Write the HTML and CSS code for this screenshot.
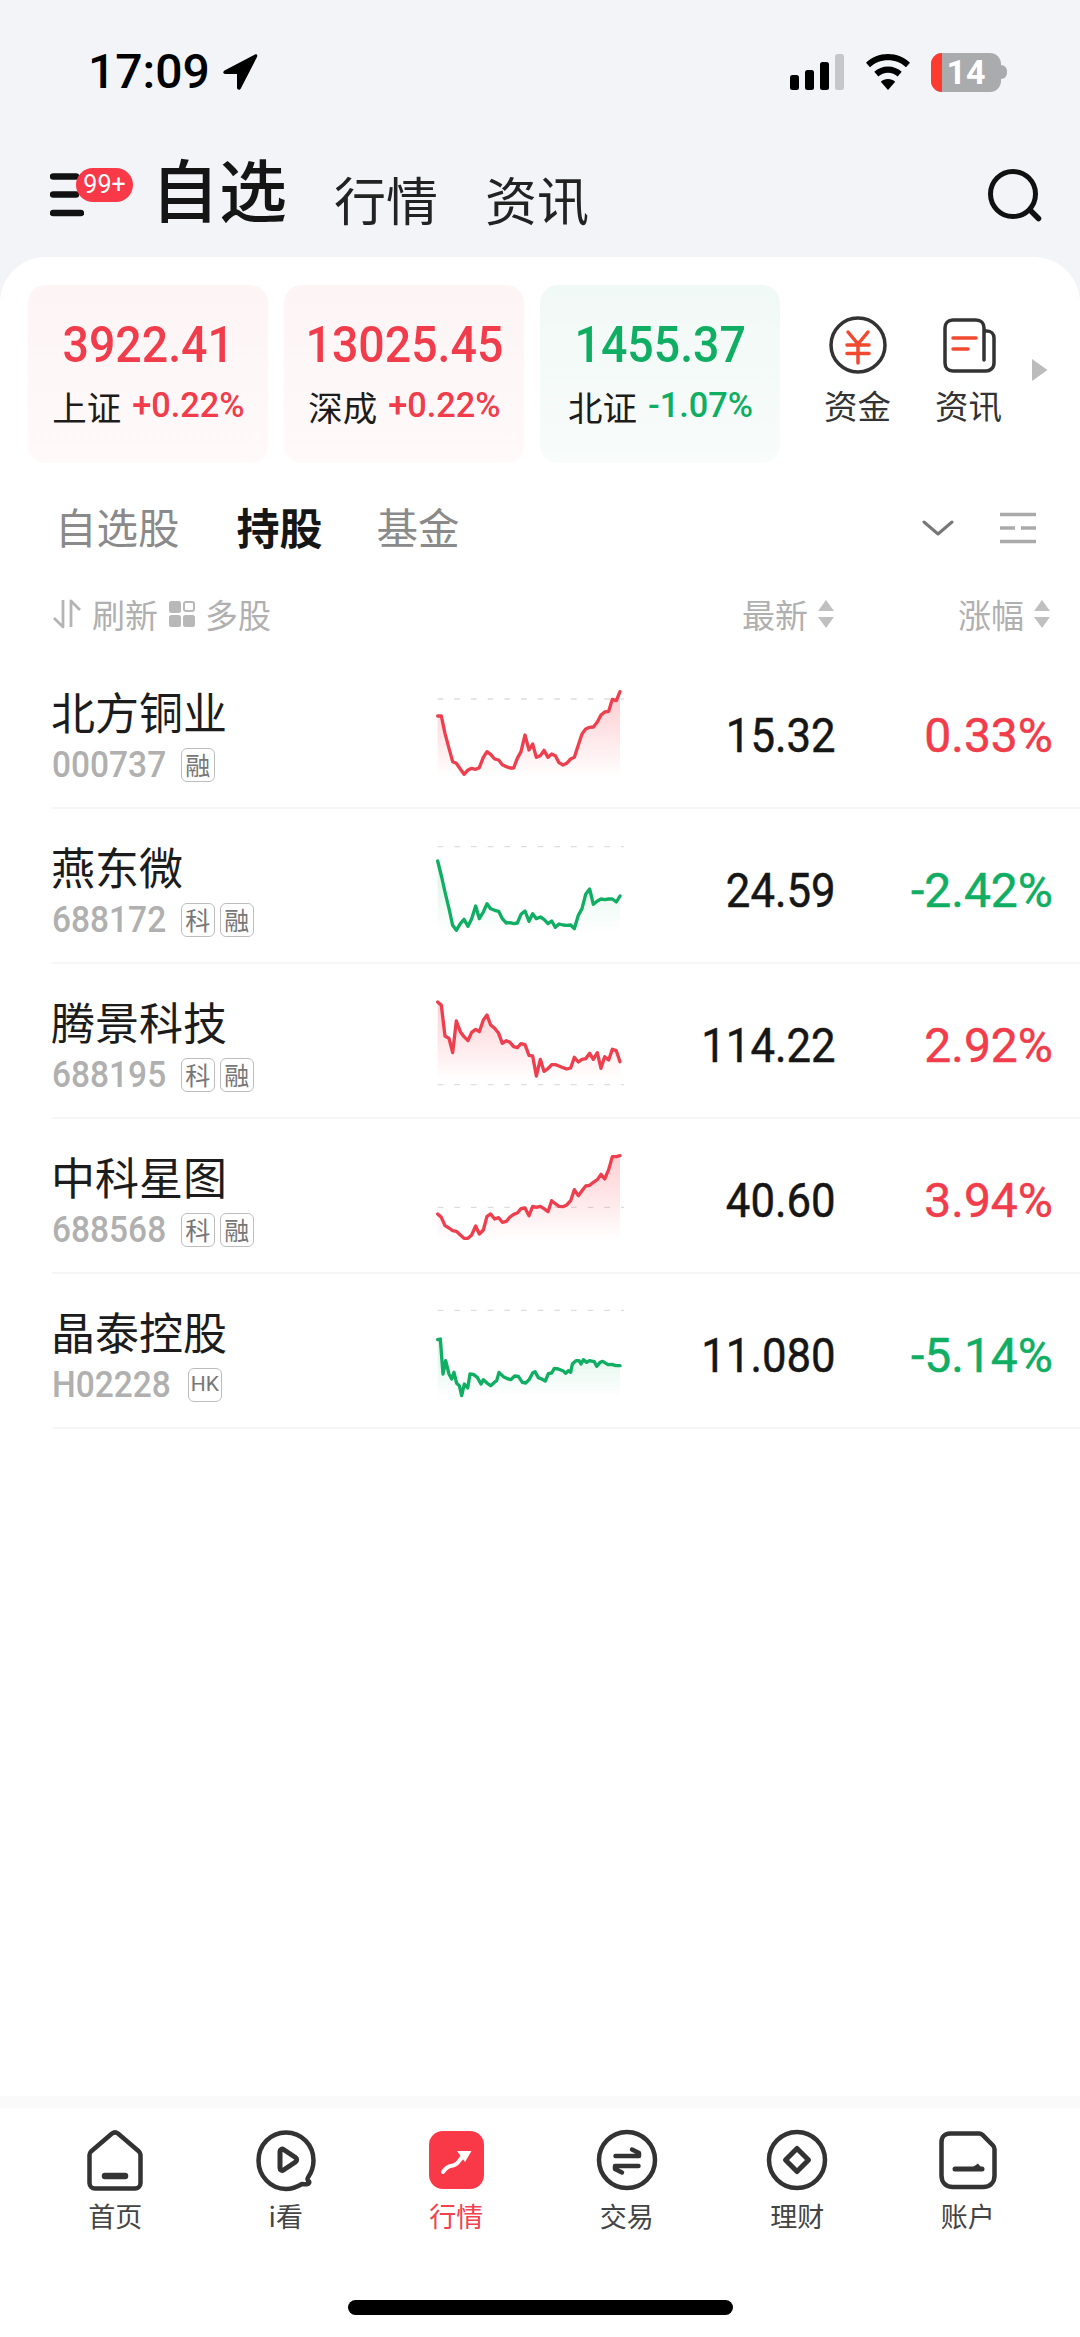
FILE: index.html
```html
<!DOCTYPE html>
<html lang="zh">
<head>
<meta charset="utf-8">
<title>自选</title>
<link rel="stylesheet" href="styles.css">
</head>
<body>
<div class="page">
  <div class="status">
    <span class="time">17:09</span>
    <svg class="loc" width="36" height="38" viewBox="0 0 36 38"><path d="M33 1.5 2.5 17.5c-2 1.200-1.500 3.500.8 3.500H15v13.500c0 2.500 2.800 3 3.800 1L35 4c.9-2-.3-3.400-2-2.500Z" fill="#000"/></svg>
    <span class="status-gap"></span>
    <svg width="54" height="36" viewBox="0 0 54 36"><rect x="0" y="21" width="9" height="15" rx="2.500"/><rect x="15" y="16" width="9" height="20" rx="2.500"/><rect x="30" y="8" width="9" height="28" rx="2.500"/><rect x="45" y="0" width="9" height="36" rx="2.500" fill="#c6c7cb"/></svg>
    <svg class="wifi" width="46" height="36" viewBox="0 0 46 36"><path d="M23 0C14.500 0 6.800 3.300 1 8.700l4 4.600C9.700 8.900 16 6.300 23 6.300s13.300 2.600 18 7l4-4.600C39.200 3.300 31.500 0 23 0Z"/><path d="M23 12.500c-5.300 0-10.100 2-13.700 5.300l4 4.600c2.600-2.300 6-3.700 9.700-3.700s7.100 1.400 9.700 3.700l4-4.600C33.100 14.500 28.300 12.500 23 12.500Z"/><path d="M23 25c-2.800 0-5.300 1-7.200 2.700L23 36l7.200-8.300C28.300 26 25.800 25 23 25Z"/></svg>
    <div class="battery"><span class="battery-red"></span><span class="battery-num">14</span></div>
    <span class="battery-nub"></span>
  </div>

  <header class="top">
    <div class="burger">
      <svg width="34" height="44" viewBox="0 0 34 44"><path d="M3 3.500H26M3 21.500H26" stroke="#111" stroke-width="6.500" stroke-linecap="round"/><path d="M3 40H31" stroke="#111" stroke-width="6.500" stroke-linecap="round"/></svg>
      <span class="badge">99+</span>
    </div>
    <span class="title">自选</span>
    <span class="nav">行情</span>
    <span class="nav">资讯</span>
    <span class="grow"></span>
    <svg class="search" width="56" height="56" viewBox="0 0 56 56"><circle cx="26" cy="26" r="22.500" fill="none" stroke="#111" stroke-width="5"/><path d="M43 42l8.500 8.500" stroke="#111" stroke-width="5.500" stroke-linecap="round"/></svg>
  </header>

  <main class="card">
    <section class="indices">
      <div class="idx up">
        <div class="idx-val"><span class="din center">3922.41</span></div>
        <div class="idx-sub"><span class="idx-name">上证</span><span class="din idx-pct">+0.22%</span></div>
      </div>
      <div class="idx up">
        <div class="idx-val"><span class="din center">13025.45</span></div>
        <div class="idx-sub"><span class="idx-name">深成</span><span class="din idx-pct">+0.22%</span></div>
      </div>
      <div class="idx down">
        <div class="idx-val"><span class="din center">1455.37</span></div>
        <div class="idx-sub"><span class="idx-name">北证</span><span class="din idx-pct">-1.07%</span></div>
      </div>
      <div class="shortcut">
        <svg width="60" height="60" viewBox="0 0 60 60"><circle cx="30" cy="30" r="27" fill="none" stroke="#333" stroke-width="3.500"/><path d="M20 17l10 12 10-12M19 30H41M19 38.500H41M30 29V48" fill="none" stroke="#f0492f" stroke-width="3.500" stroke-linecap="round" stroke-linejoin="round"/></svg>
        <span>资金</span>
      </div>
      <div class="shortcut">
        <svg width="60" height="60" viewBox="0 0 60 60"><path d="M45 16h3c4 0 7 3 7 7V48c0 5-4 8-8 8H14c-5 0-8-3-8-8V13c0-5 3-8 8-8H37c5 0 8 3 8 8V45" fill="none" stroke="#333" stroke-width="3.500" stroke-linecap="round"/><path d="M14 23H37M14 34H29" stroke="#f0492f" stroke-width="3.500" stroke-linecap="round"/></svg>
        <span>资讯</span>
      </div>
      <svg class="more" width="16" height="22" viewBox="0 0 16 22"><path d="M0 0 15.500 11 0 22Z" fill="#bcbcbc"/></svg>
    </section>

    <section class="subtabs">
      <span class="subtab">自选股</span>
      <span class="subtab on">持股</span>
      <span class="subtab">基金</span>
      <span class="grow"></span>
      <svg class="chev" width="32" height="16" viewBox="0 0 32 16"><path d="M2 2 16 14 30 2" fill="none" stroke="#777" stroke-width="3" stroke-linecap="round" stroke-linejoin="round"/></svg>
      <svg class="lines" width="36" height="32" viewBox="0 0 36 32"><path d="M0 2.500H36M0 16H15M21 16H36M0 29.500H36" stroke="#aaa" stroke-width="3.500"/></svg>
    </section>

    <section class="listhead">
      <svg width="30" height="30" viewBox="0 0 30 30"><path d="M11 1V28L2 19M19 28V2L28 11" fill="none" stroke="#b4b4b4" stroke-width="2.800" stroke-linejoin="round"/></svg>
      <span class="lh-text">刷新</span>
      <svg class="lh-grid" width="26" height="26" viewBox="0 0 26 26"><rect width="12" height="12" rx="2.500" fill="#b8b8b8"/><rect x="15" y="1" width="10" height="9" rx="2" fill="none" stroke="#b8b8b8" stroke-width="2"/><rect y="14" width="12" height="12" rx="2.500" fill="#b8b8b8"/><rect x="14" y="14" width="12" height="12" rx="2.500" fill="#b8b8b8"/></svg>
      <span class="lh-text">多股</span>
      <span class="grow"></span>
      <span class="lh-text">最新</span>
      <svg class="sort" width="16" height="28" viewBox="0 0 16 28"><path d="M8 0 16 11H0ZM8 28 0 17H16Z" fill="#c0c0c0"/></svg>
      <span class="lh-text lh-pct">涨幅</span>
      <svg class="sort" width="16" height="28" viewBox="0 0 16 28"><path d="M8 0 16 11H0ZM8 28 0 17H16Z" fill="#c0c0c0"/></svg>
    </section>

    <section class="list">
      <article class="row">
        <div class="stock">
          <div class="name">北方铜业</div>
          <div class="meta"><span class="din code">000737</span><span class="tag">融</span></div>
        </div>
        <svg class="spark" viewBox="105 12 570 390" width="190" height="130">
          <defs><linearGradient id="g1" x1="0" y1="0" x2="0" y2="1"><stop offset="0" stop-color="#f93848" stop-opacity=".26"/><stop offset="1" stop-color="#f93848" stop-opacity="0"/></linearGradient></defs>
          <line class="dash" x1="113" y1="87" x2="672" y2="87"/>
          <polygon fill="url(#g1)" points="113,320 113,138 124,138 135,190 147,235 158,275 169,280 181,297 192,313 204,300 215,295 227,298 238,293 250,262 261,245 272,253 284,267 296,270 307,284 319,290 330,294 341,294 352,265 363,245 375,195 387,240 398,222 409,262 421,257 432,241 444,262 455,252 466,257 477,278 489,285 500,280 512,267 523,262 535,225 546,192 557,177 569,172 580,171 592,156 603,135 614,126 626,124 637,88 649,92 660,65 660,320"/>
          <polyline class="ln-red" points="113,138 124,138 135,190 147,235 158,275 169,280 181,297 192,313 204,300 215,295 227,298 238,293 250,262 261,245 272,253 284,267 296,270 307,284 319,290 330,294 341,294 352,265 363,245 375,195 387,240 398,222 409,262 421,257 432,241 444,262 455,252 466,257 477,278 489,285 500,280 512,267 523,262 535,225 546,192 557,177 569,172 580,171 592,156 603,135 614,126 626,124 637,88 649,92 660,65"/>
        </svg>
        <div class="price"><span class="din right">15.32</span></div>
        <div class="pct red"><span class="din right">0.33%</span></div>
      </article>

      <article class="row">
        <div class="stock">
          <div class="name">燕东微</div>
          <div class="meta"><span class="din code">688172</span><span class="tag">科</span><span class="tag">融</span></div>
        </div>
        <svg class="spark" viewBox="105 476 570 390" width="190" height="130">
          <defs><linearGradient id="g2" x1="0" y1="0" x2="0" y2="1"><stop offset="0" stop-color="#0fae63" stop-opacity=".16"/><stop offset="1" stop-color="#0fae63" stop-opacity="0"/></linearGradient></defs>
          <line class="dash" x1="113" y1="529" x2="672" y2="529"/>
          <polygon fill="url(#g2)" points="113,785 113,572 125,620 135,665 147,715 158,765 169,780 181,760 192,747 204,768 215,745 227,707 238,745 250,725 261,700 272,715 284,720 296,723 307,745 319,758 330,757 341,760 352,758 363,732 375,722 387,753 398,730 409,745 421,740 432,747 444,760 455,752 466,771 477,761 489,764 500,765 512,764 523,775 535,735 546,715 557,672 569,656 580,702 592,692 603,686 614,688 626,686 637,686 649,695 660,677 660,785"/>
          <polyline class="ln-green" points="113,572 125,620 135,665 147,715 158,765 169,780 181,760 192,747 204,768 215,745 227,707 238,745 250,725 261,700 272,715 284,720 296,723 307,745 319,758 330,757 341,760 352,758 363,732 375,722 387,753 398,730 409,745 421,740 432,747 444,760 455,752 466,771 477,761 489,764 500,765 512,764 523,775 535,735 546,715 557,672 569,656 580,702 592,692 603,686 614,688 626,686 637,686 649,695 660,677"/>
        </svg>
        <div class="price"><span class="din right">24.59</span></div>
        <div class="pct green"><span class="din right">-2.42%</span></div>
      </article>

      <article class="row">
        <div class="stock">
          <div class="name">腾景科技</div>
          <div class="meta"><span class="din code">688195</span><span class="tag">科</span><span class="tag">融</span></div>
        </div>
        <svg class="spark" viewBox="105 942 570 390" width="190" height="130">
          <defs><linearGradient id="g3" x1="0" y1="0" x2="0" y2="1"><stop offset="0" stop-color="#f93848" stop-opacity=".24"/><stop offset="1" stop-color="#f93848" stop-opacity="0"/></linearGradient></defs>
          <line class="dash" x1="113" y1="1244" x2="672" y2="1244"/>
          <polygon fill="url(#g3)" points="113,1232 113,996 124,1006 135,1098 147,1105 158,1148 169,1053 181,1085 192,1100 204,1112 215,1087 227,1078 238,1085 250,1050 261,1035 272,1065 284,1075 296,1090 307,1120 319,1112 330,1117 341,1130 352,1133 363,1121 375,1124 387,1156 398,1158 409,1218 421,1168 432,1204 444,1196 455,1184 466,1184 477,1188 489,1193 500,1197 512,1194 523,1162 535,1176 546,1168 557,1166 569,1150 580,1168 592,1148 603,1195 614,1160 626,1170 637,1138 649,1142 660,1175 660,1232"/>
          <polyline class="ln-red" points="113,996 124,1006 135,1098 147,1105 158,1148 169,1053 181,1085 192,1100 204,1112 215,1087 227,1078 238,1085 250,1050 261,1035 272,1065 284,1075 296,1090 307,1120 319,1112 330,1117 341,1130 352,1133 363,1121 375,1124 387,1156 398,1158 409,1218 421,1168 432,1204 444,1196 455,1184 466,1184 477,1188 489,1193 500,1197 512,1194 523,1162 535,1176 546,1168 557,1166 569,1150 580,1168 592,1148 603,1195 614,1160 626,1170 637,1138 649,1142 660,1175"/>
        </svg>
        <div class="price"><span class="din right">114.22</span></div>
        <div class="pct red"><span class="din right">2.92%</span></div>
      </article>

      <article class="row">
        <div class="stock">
          <div class="name">中科星图</div>
          <div class="meta"><span class="din code">688568</span><span class="tag">科</span><span class="tag">融</span></div>
        </div>
        <svg class="spark" viewBox="105 120 570 390" width="190" height="130">
          <defs><linearGradient id="g4" x1="0" y1="0" x2="0" y2="1"><stop offset="0" stop-color="#f93848" stop-opacity=".24"/><stop offset="1" stop-color="#f93848" stop-opacity="0"/></linearGradient></defs>
          <line class="dash" x1="113" y1="325" x2="672" y2="325"/>
          <polygon fill="url(#g4)" points="113,425 113,345 124,355 135,380 147,387 158,395 169,397 181,408 192,418 204,418 215,408 227,381 238,405 250,393 261,352 272,345 284,360 296,356 307,370 319,367 330,354 341,346 352,342 363,329 375,327 387,350 398,322 409,325 421,322 432,329 444,338 455,305 466,314 477,322 489,323 500,318 512,305 523,272 535,290 546,275 557,261 569,259 580,250 592,242 603,226 614,240 626,212 637,173 649,173 660,170 660,425"/>
          <polyline class="ln-red" points="113,345 124,355 135,380 147,387 158,395 169,397 181,408 192,418 204,418 215,408 227,381 238,405 250,393 261,352 272,345 284,360 296,356 307,370 319,367 330,354 341,346 352,342 363,329 375,327 387,350 398,322 409,325 421,322 432,329 444,338 455,305 466,314 477,322 489,323 500,318 512,305 523,272 535,290 546,275 557,261 569,259 580,250 592,242 603,226 614,240 626,212 637,173 649,173 660,170"/>
        </svg>
        <div class="price"><span class="din right">40.60</span></div>
        <div class="pct red"><span class="din right">3.94%</span></div>
      </article>

      <article class="row">
        <div class="stock">
          <div class="name">晶泰控股</div>
          <div class="meta"><span class="din code">H02228</span><span class="tag tag-hk">HK</span></div>
        </div>
        <svg class="spark" viewBox="105 585 570 390" width="190" height="130">
          <defs><linearGradient id="g5" x1="0" y1="0" x2="0" y2="1"><stop offset="0" stop-color="#0fae63" stop-opacity=".16"/><stop offset="1" stop-color="#0fae63" stop-opacity="0"/></linearGradient></defs>
          <line class="dash" x1="113" y1="634" x2="672" y2="634"/>
          <polygon fill="url(#g5)" points="113,895 113,722 121,720 129,825 137,785 147,825 155,840 162,820 170,853 178,860 185,890 193,855 203,867 210,825 220,826 232,835 243,855 250,842 262,853 272,860 282,851 290,845 297,820 310,833 320,838 332,842 344,831 355,832 367,850 377,852 388,841 398,822 405,818 415,836 425,840 436,846 445,824 455,822 463,808 475,810 490,816 497,823 505,815 512,820 517,795 528,785 537,785 543,795 550,782 560,790 568,785 583,788 590,802 600,790 608,787 624,797 635,796 648,800 660,800 660,895"/>
          <polyline class="ln-green" points="113,722 121,720 129,825 137,785 147,825 155,840 162,820 170,853 178,860 185,890 193,855 203,867 210,825 220,826 232,835 243,855 250,842 262,853 272,860 282,851 290,845 297,820 310,833 320,838 332,842 344,831 355,832 367,850 377,852 388,841 398,822 405,818 415,836 425,840 436,846 445,824 455,822 463,808 475,810 490,816 497,823 505,815 512,820 517,795 528,785 537,785 543,795 550,782 560,790 568,785 583,788 590,802 600,790 608,787 624,797 635,796 648,800 660,800"/>
        </svg>
        <div class="price"><span class="din right">11.080</span></div>
        <div class="pct green"><span class="din right">-5.14%</span></div>
      </article>
    </section>

    <span class="grow"></span>

    <nav class="tabbar">
      <div class="tab">
        <svg width="64" height="64" viewBox="0 0 64 64"><path d="M29 4.500 8 22.500c-1 1-1.500 2-1.500 3.500V54c0 3 2.500 5.500 5.500 5.500H52c3 0 5.500-2.500 5.500-5.500V26c0-1.500-.5-2.500-1.500-3.500L35 4.500c-2-1.500-4-1.500-6 0Z" fill="none" stroke="#333" stroke-width="4.500" stroke-linejoin="round"/><path d="M22 47H42" stroke="#333" stroke-width="6.500" stroke-linecap="round"/></svg>
        <span>首页</span>
      </div>
      <div class="tab">
        <svg width="64" height="64" viewBox="0 0 64 64"><path d="M48 55C43 58 38 60 32 60 16.500 60 4.500 47 4.500 31.500S16.500 3.500 32 3.500 59.500 16 59.500 31.500c0 6.500-2 12-5.500 17-1 1.500-.5 3 .5 3.500 1.500 1.200.5 3-1.500 3.200-2 .2-3.500 0-5-.2Z" fill="none" stroke="#333" stroke-width="4.500" stroke-linejoin="round"/><path d="M26 22.500c0-2 2-3 3.500-2l12 8c1.500 1 1.500 3.500 0 4.500l-12 8c-1.500 1-3.500 0-3.500-2Z" fill="none" stroke="#333" stroke-width="5" stroke-linejoin="round"/></svg>
        <span>i看</span>
      </div>
      <div class="tab tab-on">
        <svg width="64" height="64" viewBox="0 0 64 64"><rect x="5" y="2" width="55" height="58" rx="14" fill="#f93848"/><path d="M19 43c3-5 6-6 10-6.500 3-.5 4.500-2 6.500-5l3-4" fill="none" stroke="#fff" stroke-width="4" stroke-linecap="round"/><path d="M33 22H47.500L41 33Z" fill="#fff"/></svg>
        <span>行情</span>
      </div>
      <div class="tab">
        <svg width="64" height="64" viewBox="0 0 64 64"><circle cx="32" cy="31" r="28" fill="none" stroke="#333" stroke-width="4.500"/><path d="M20.500 27H44V24L37 20.500M43.500 37H20V40L27 43.500" fill="none" stroke="#333" stroke-width="4.500" stroke-linecap="round" stroke-linejoin="round"/></svg>
        <span>交易</span>
      </div>
      <div class="tab">
        <svg width="64" height="64" viewBox="0 0 64 64"><circle cx="32" cy="31" r="28" fill="none" stroke="#333" stroke-width="4.500"/><path d="M32 19.500 43.500 31 32 42.500 20.500 31Z" fill="none" stroke="#333" stroke-width="5" stroke-linejoin="round"/></svg>
        <span>理财</span>
      </div>
      <div class="tab">
        <svg width="64" height="64" viewBox="0 0 64 64"><path d="M14 4.500H43c1.500 0 2.800.6 3.800 1.600L57 16.500c1 1 1.500 2.300 1.500 3.800V46.500c0 7-4.500 11.500-11.500 11.500H17C10 58 5.500 53.500 5.500 46.500V13C5.500 8 9 4.500 14 4.500Z" fill="none" stroke="#333" stroke-width="4.500"/><path d="M19 40H46" stroke="#333" stroke-width="5" stroke-linecap="round"/><path d="M37 38 42 34.500 48 42H37Z" fill="#333"/></svg>
        <span>账户</span>
      </div>
    </nav>
    <div class="home-wrap"><span class="home"></span></div>
  </main>
</div>
</body>
</html>
```
FILE: styles.css
```css
* { box-sizing: border-box; }
html, body { margin: 0; padding: 0; }
body {
  width: 1080px;
  height: 2337px;
  overflow: hidden;
  background: #f2f4f8;
  font-family: "Noto Sans CJK SC", "Noto Sans", sans-serif;
  color: #1a1a1a;
}
svg { display: block; flex: none; }
.page { height: 2337px; display: flex; flex-direction: column; }
.grow { flex: 1; }

/* status bar */
.status {
  height: 144px;
  padding: 0 73px 0 88px;
  display: flex;
  align-items: center;
  flex: none;
}
.time { font: 500 48px/48px Roboto, sans-serif; color: #000; }
.loc { margin-left: 12px; }
.status-gap { flex: 1; }
.wifi { margin-left: 21px; }
.battery {
  position: relative;
  margin-left: 20px;
  width: 70px;
  height: 39px;
  border-radius: 11px;
  background: #a9abad;
  overflow: hidden;
  display: flex;
  align-items: center;
  justify-content: center;
}
.battery-red { position: absolute; left: 0; top: 0; bottom: 0; width: 11px; background: #ff3b30; }
.battery-num { position: relative; font: 700 34px/39px Roboto, sans-serif; color: #fff; }
.battery-nub { width: 6px; height: 14px; background: #a9abad; border-radius: 0 6px 6px 0; }

/* header */
.top {
  height: 113px;
  flex: none;
  padding: 0 37px 0 50px;
  display: flex;
  align-items: center;
}
.burger { position: relative; width: 34px; height: 44px; margin-top: -11px; }
.badge {
  position: absolute;
  left: 26px;
  top: -5px;
  width: 57px;
  height: 34px;
  border-radius: 17px;
  background: #f93848;
  color: #fff;
  font: 400 25px/34px Roboto, sans-serif;
  text-align: center;
}
.title { margin-left: 67px; font-size: 68px; line-height: 80px; font-weight: 500; margin-top: -26px; color: #151515; }
.nav { margin-left: 47px; font-size: 52px; line-height: 70px; margin-top: -4px; color: #222; }
.search { margin-top: -9px; }

/* main card */
.card {
  flex: 1;
  background: #fff;
  border-radius: 46px 46px 0 0;
  display: flex;
  flex-direction: column;
  min-height: 0;
}
.din { display: inline-block; font-family: Roboto, sans-serif; transform: scaleX(.91); white-space: nowrap; }
.center { transform-origin: center; }
.right { transform-origin: right center; }

/* index cards */
.indices { display: flex; padding: 28px 0 0 28px; height: 206px; flex: none; align-items: flex-start; }
.idx { width: 240px; height: 178px; border-radius: 18px; margin-right: 16px; text-align: center; padding-top: 26px; flex: none; }
.up { background: linear-gradient(#fdf5f5, #fff9f9); color: #f03c4b; }
.down { background: linear-gradient(#f1f9f6, #f8fcfb); color: #0fae63; }
.idx-val { font-size: 50px; line-height: 58px; font-weight: 500; }
.idx-val .din { transform: scaleX(.93); }
.idx-sub { display: flex; justify-content: center; align-items: center; margin-top: 12px; height: 40px; white-space: nowrap; padding-left: 2px; }
.idx-name { font-size: 34.500px; line-height: 40px; color: #1c1c1c; }
.idx-pct { font-size: 35px; line-height: 40px; margin-left: 10px; transform: scaleX(.98); font-weight: 500; }
.shortcut { width: 111px; display: flex; flex-direction: column; align-items: center; padding-top: 30px; flex: none; font-size: 33.500px; line-height: 40px; color: #333; }
.shortcut svg { margin-bottom: 10px; }
.idx + .shortcut { margin-left: 6px; }
.more { margin: 74px 0 0 8px; }

/* sub tabs */
.subtabs { height: 68px; margin-top: 31px; padding: 0 44px 0 55px; display: flex; align-items: center; flex: none; }
.subtab { font-size: 41.500px; line-height: 68px; color: #8a8a8a; margin-right: 57px; margin-top: -4px; }
.subtab.on { font-size: 43px; font-weight: 700; color: #161616; margin-right: 54px; }
.chev { margin-right: 46px; }

/* list head */
.listhead { height: 92px; padding: 12px 30px 0 52px; display: flex; align-items: center; flex: none; }
.lh-text { font-size: 33px; line-height: 44px; color: #b0b0b0; }
.listhead svg + .lh-text { margin-left: 10px; }
.lh-grid { margin-left: 11px; }
.sort { margin-left: 10px; }
.listhead .sort + .lh-pct { margin-left: 124px; }

/* rows */
.row {
  height: 155px;
  margin-left: 52px;
  padding-right: 27px;
  border-bottom: 2px solid #f6f6f6;
  display: grid;
  grid-template-columns: 383px 190px 211px 217px;
  align-items: center;
}
.stock { display: flex; flex-direction: column; padding-top: 10px; }
.name { font-size: 44px; line-height: 50px; color: #1c1c1c; margin-left: -1px; }
.meta { display: flex; align-items: center; height: 40px; margin-top: 9px; }
.code { font-size: 36px; line-height: 40px; font-weight: 500; color: #b0b0b0; transform: scaleX(.93); transform-origin: left center; margin-right: 6px; }
.tag {
  width: 34px;
  height: 34px;
  margin-right: 5px;
  border: 1.500px solid #bdbdbd;
  border-radius: 6px;
  font-size: 25px;
  line-height: 30px;
  text-align: center;
  color: #777;
}
.tag-hk { font-family: Roboto, sans-serif; font-size: 21px; margin-left: 2px; }
.spark { align-self: start; margin-top: 20px; }
.dash { stroke: #ddd; stroke-width: 4; stroke-dasharray: 17 33; }
.ln-red, .ln-green { fill: none; stroke-width: 10; stroke-linejoin: round; stroke-linecap: round; }
.ln-red { stroke: #ee3f4e; }
.ln-green { stroke: #0fae63; }
.price, .pct { text-align: right; font-size: 48px; line-height: 56px; margin-top: 6px; font-weight: 400; -webkit-text-stroke: .5px currentColor; }
.price { color: #161616; }
.pct .din { transform: scaleX(1); }
.red { color: #f03c4b; }
.green { color: #0fae63; }

/* tab bar */
.tabbar {
  height: 138px;
  padding: 21px 27px 0 30px;
  display: grid;
  grid-template-columns: repeat(6, 1fr);
  border-top: 12px solid #fafafa;
  flex: none;
}
.tab { display: flex; flex-direction: column; align-items: center; font-size: 27px; line-height: 34px; color: #444; }
.tab svg { margin-bottom: 6px; }
.tab-on { color: #f2414f; }
.home-wrap { height: 103px; display: flex; justify-content: center; flex: none; padding-top: 66px; }
.home { width: 385px; height: 15px; border-radius: 8px; background: #000; }
```
